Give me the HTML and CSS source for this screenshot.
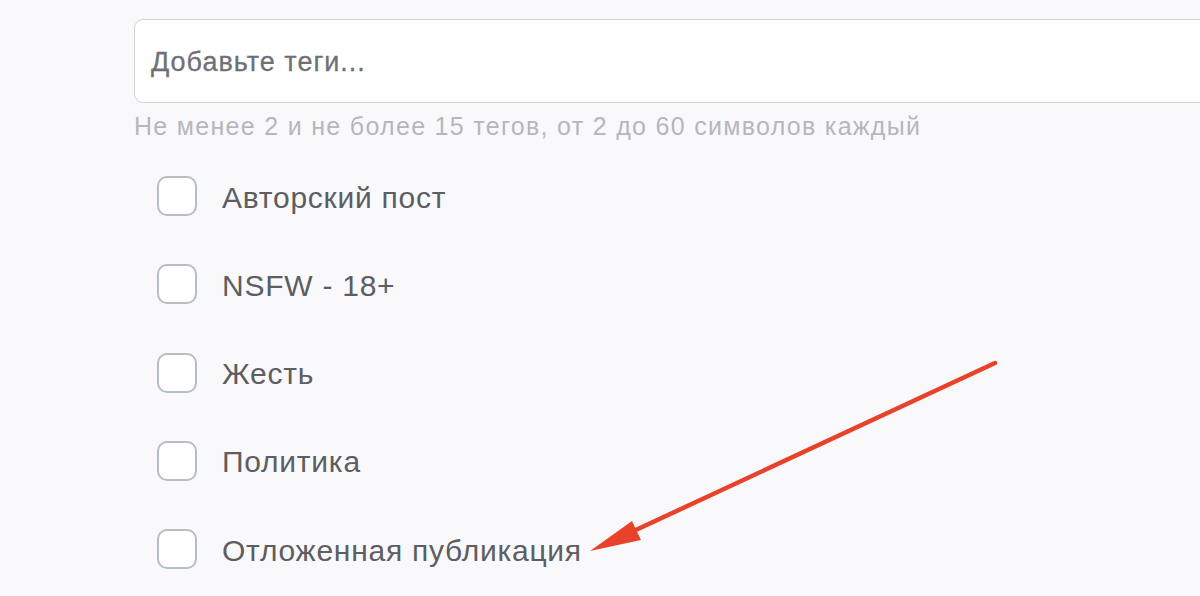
FILE: index.html
```html
<!DOCTYPE html>
<html lang="ru">
<head>
<meta charset="utf-8">
<title>Теги</title>
<link rel="stylesheet" href="styles.css">
</head>
<body>
<div class="form">
  <div class="tags-input"><span class="placeholder">Добавьте теги...</span></div>
  <div class="hint">Не менее 2 и не более 15 тегов, от 2 до 60 символов каждый</div>
  <ul class="options">
    <li class="option"><span class="box"></span><span class="label">Авторский пост</span></li>
    <li class="option"><span class="box"></span><span class="label">NSFW - 18+</span></li>
    <li class="option"><span class="box"></span><span class="label">Жесть</span></li>
    <li class="option"><span class="box"></span><span class="label">Политика</span></li>
    <li class="option"><span class="box"></span><span class="label">Отложенная публикация</span></li>
  </ul>
</div>
<svg class="arrow" width="1200" height="596" viewBox="0 0 1200 596">
  <line x1="995" y1="363" x2="625" y2="535" stroke="#e8432a" stroke-width="4.5" stroke-linecap="round"/>
  <polygon points="590,551 632,521 641,540" fill="#e8432a"/>
</svg>
</body>
</html>
```
FILE: styles.css
```css
html, body {
  margin: 0;
  padding: 0;
  background: #f9f9fb;
  overflow: hidden;
  height: 596px;
}
body {
  position: relative;
  font-family: "Liberation Sans", Arial, sans-serif;
}
.form {
  padding: 19px 0 0 134px;
}
.tags-input {
  box-sizing: border-box;
  width: 1120px;
  height: 84px;
  background: #ffffff;
  border: 1.5px solid #d0d3d8;
  border-radius: 9px;
  display: flex;
  align-items: center;
  padding-left: 16px;
  padding-top: 2px;
}
.placeholder {
  font-size: 27px;
  letter-spacing: 1px;
  color: #6f7076;
  -webkit-text-stroke: 0.3px #6f7076;
}
.hint {
  margin-top: 11px;
  font-size: 25px;
  line-height: 24px;
  letter-spacing: 1.3px;
  color: #b6b7bc;
}
.options {
  list-style: none;
  margin: 14px 0 0;
  padding: 0 0 0 23px;
}
.option {
  height: 88.25px;
  display: flex;
  align-items: center;
}
.box {
  box-sizing: border-box;
  width: 40px;
  height: 40px;
  border: 2px solid #b4bfc6;
  border-radius: 10px;
  background: #ffffff;
  flex: none;
}
.label {
  margin-left: 25px;
  padding-top: 3px;
  font-size: 30px;
  letter-spacing: 0.75px;
  color: #5d5d62;
}
.arrow {
  position: absolute;
  left: 0;
  top: 0;
}
```
